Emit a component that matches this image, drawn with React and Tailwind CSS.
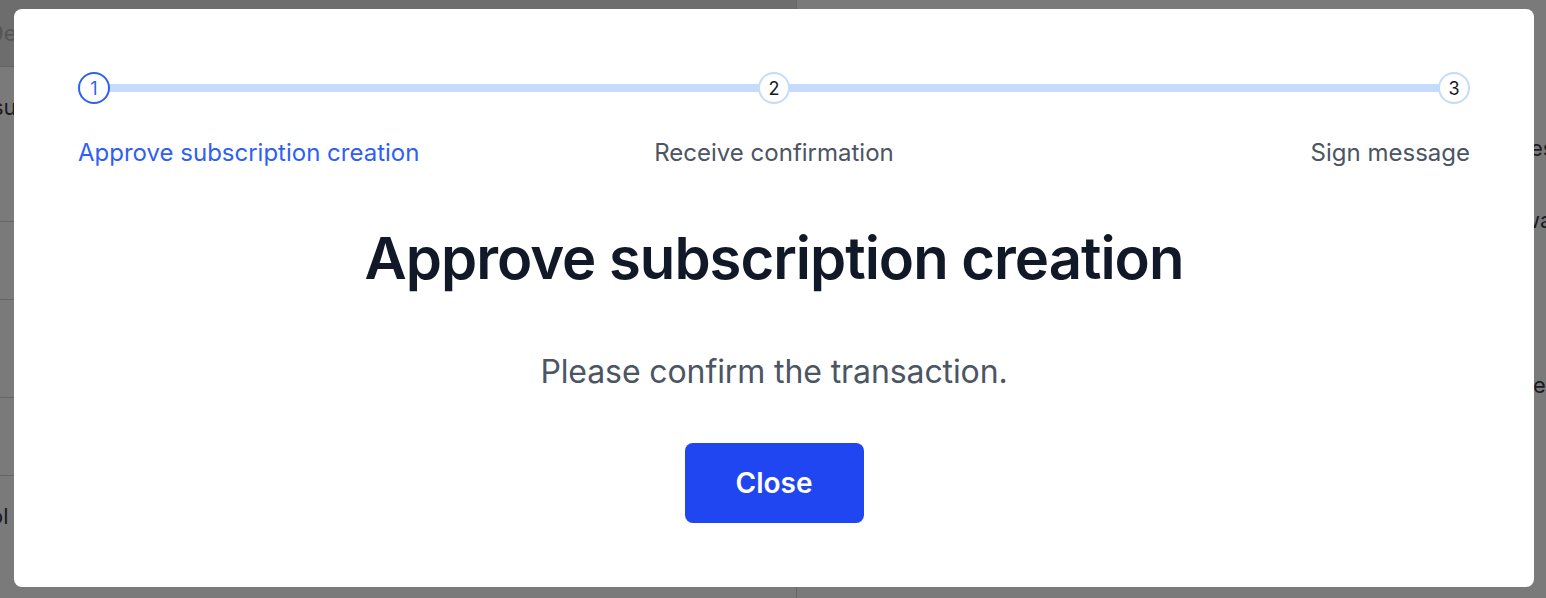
import React from 'react';

const steps = [
    { n: 1, label: 'Approve subscription creation' },
    { n: 2, label: 'Receive confirmation' },
    { n: 3, label: 'Sign message' },
];

const App = () => {
    const active = 1;
    return (
        <div className="relative h-[598px] w-full overflow-hidden bg-[#7a7a7a]" style={{ fontFamily: 'Inter, "Noto Sans", sans-serif' }}>
            {/* page behind the dialog, dimmed */}
            <div className="flex h-full">
                <div className="w-[797px] flex-none border-r border-[#666] text-[22px] text-[#1c1c1e]">
                    <div className="h-[67px] bg-[#6d6d6e] border-b border-[#646464] flex items-center text-[#555] -ml-[10px]">9e</div>
                    <div className="h-[155px] border-b border-[#666] pt-[24px] -ml-[8px]">su</div>
                    <div className="h-[78px] border-b border-[#666]"></div>
                    <div className="h-[98px] border-b border-[#666]"></div>
                    <div className="h-[78px] border-b border-[#666]"></div>
                    <div className="pt-[24px] -ml-[10px]">ol</div>
                </div>
                <div className="flex-1 text-[22px] leading-[30px] text-[#1c1c1e] whitespace-nowrap">
                    <div className="pt-[133px] pl-[733px]">es</div>
                    <div className="pt-[42px] pl-[725px]">wa</div>
                    <div className="pt-[135px] pl-[736px]">e</div>
                </div>
            </div>

            {/* dialog */}
            <div className="absolute left-[14px] top-[9px] w-[1520px] h-[578px] rounded-lg bg-white px-[64px] pt-[63px]">
                <div className="relative">
                    <div className="absolute left-[16px] right-[16px] top-[12px] h-[8px] bg-[#c6dafc]"></div>
                    <div className="relative flex justify-between">
                        {steps.map(s => (
                            <div key={s.n} className={`w-[32px] h-[32px] rounded-full bg-white flex items-center justify-center text-[18px] ${s.n === active ? 'border-2 border-[#2f5ff5] text-[#2f5ff5]' : 'border-2 border-[#c6dafc] text-[#111827]'}`}>
                                {s.n}
                            </div>
                        ))}
                    </div>
                </div>
                <div className="grid grid-cols-3 mt-[33px] text-[24px] leading-[32px]">
                    <div className="text-left text-[#2f5ff5]">{steps[0].label}</div>
                    <div className="text-center text-[#4b5563]">{steps[1].label}</div>
                    <div className="text-right text-[#4b5563]">{steps[2].label}</div>
                </div>
                <h1 className="mt-[53px] text-center text-[58px] leading-[72px] font-semibold tracking-[-1px] text-[#111827]">Approve subscription creation</h1>
                <p className="mt-[58px] text-center text-[32px] leading-[40px] tracking-[-0.1px] text-[#4b5563]">Please confirm the transaction.</p>
                <div className="flex justify-center mt-[51px]">
                    <button className="w-[179px] h-[80px] rounded-lg bg-[#2046f2] text-white text-[28px] font-semibold">Close</button>
                </div>
            </div>
        </div>
    );
};

export default App;
